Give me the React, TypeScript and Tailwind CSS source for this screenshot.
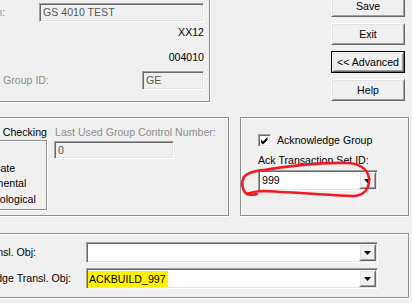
import type { ReactNode } from "react"

// classic win32 bevels
const sunken =
    "border border-t-[#a0a0a0] border-l-[#a0a0a0] border-r-white border-b-white shadow-[inset_1px_1px_0_#696969,inset_-1px_-1px_0_#e3e3e3]"
const raised =
    "border border-t-white border-l-white border-r-[#696969] border-b-[#696969] shadow-[inset_1px_1px_0_#e3e3e3,inset_-1px_-1px_0_#a0a0a0]"
const etched = "border border-[#909090] shadow-[inset_1px_1px_0_#ffffff,1px_1px_0_#ffffff]"

const grey = "text-[#8d8d8d]"

// label that is right-aligned to a fixed end and spills to the left
function Label({ width, className = "", children }: { width: string; className?: string; children: ReactNode }) {
    return (
        <div className={`flex justify-end shrink-0 ${width}`}>
            <span className={`whitespace-nowrap shrink-0 ${className}`}>{children}</span>
        </div>
    )
}

function Btn({ children, primary }: { children: ReactNode; primary?: boolean }) {
    if (primary) {
        return (
            <div className="h-[22px] w-[74px] border border-black">
                <div className={`h-full w-full flex items-center justify-center ${raised}`}>{children}</div>
            </div>
        )
    }
    return <div className={`h-[22px] w-[74px] flex items-center justify-center ${raised}`}>{children}</div>
}

function Combo({ className = "", children }: { className?: string; children?: ReactNode }) {
    return (
        <div className={`flex h-[21px] p-[1px] bg-white shrink-0 ${sunken} ${className}`}>
            <div className="flex-1 flex items-center overflow-hidden">{children}</div>
            <div className={`w-[17px] h-[17px] shrink-0 flex items-center justify-center bg-[#f0f0f0] ${raised}`}>
                <svg width="7" height="4" viewBox="0 0 7 4">
                    <polygon points="0,0 7,0 3.5,4" fill="#000" />
                </svg>
            </div>
        </div>
    )
}

function ReadOnlyBox({ className = "", children }: { className?: string; children: ReactNode }) {
    return (
        <div className={`flex items-center pl-[3px] shrink-0 bg-[#f0f0f0] text-[#555] ${sunken} ${className}`}>
            {children}
        </div>
    )
}

function Radio({ children, className = "" }: { children: ReactNode; className?: string }) {
    return (
        <div className={`flex items-center h-[13px] ${className}`}>
            <div className="w-[12px] h-[12px] rounded-full bg-white border border-[#808080] shrink-0" />
            <span className="ml-[5px] whitespace-nowrap">{children}</span>
        </div>
    )
}

export default function App() {
    return (
        <div className="relative w-[412px] h-[303px] overflow-hidden bg-[#f0f0f0] text-black text-[10.6px] leading-[13px] font-['Liberation_Sans',Arial,sans-serif]">
            {/* Top: header fields + dialog buttons */}
            <div className="flex -mt-[12px]">
                <div className={`-ml-[12px] w-[222px] h-[114px] shrink-0 flex flex-col pt-[14px] ${etched}`}>
                    <div className="flex items-center h-[19px]">
                        <Label width="w-[16px]" className={grey}>Description:</Label>
                        <ReadOnlyBox className="ml-[34px] w-[165px] h-[19px]">GS 4010 TEST</ReadOnlyBox>
                    </div>
                    <div className="mt-[4px] flex justify-end w-[215px] h-[13px]">XX12</div>
                    <div className="mt-[12px] flex justify-end w-[215px] h-[13px]">004010</div>
                    <div className="mt-[7px] flex items-center h-[19px]">
                        <div className={`w-[69px] shrink-0 pl-[14px] whitespace-nowrap ${grey}`}>Group ID:</div>
                        <ReadOnlyBox className="ml-[84px] w-[62px] h-[19px]">GE</ReadOnlyBox>
                    </div>
                </div>

                <div className="ml-[121px] mt-[7px] flex flex-col gap-[6px]">
                    <Btn>Save</Btn>
                    <Btn>Exit</Btn>
                    <Btn primary>&lt;&lt; Advanced</Btn>
                    <Btn>Help</Btn>
                </div>
            </div>

            {/* Middle: control number checking + acknowledgement */}
            <div className="flex mt-[15px] h-[99px]">
                <div className={`-ml-[12px] w-[241px] h-full shrink-0 flex ${etched}`}>
                    <div className="w-[58px] shrink-0 flex flex-col pt-[8px]">
                        <Label width="w-[58px]">Control Number Checking</Label>
                        <div className={`mt-[1px] -ml-[50px] w-[108px] h-[70px] shrink-0 flex flex-col pt-[5px] pl-[14px] ${etched}`}>
                            <Radio>None</Radio>
                            <Radio className="mt-[3px]">Duplicate</Radio>
                            <Radio className="mt-[2px]">Incremental</Radio>
                            <Radio className="mt-[3px]">Chronological</Radio>
                        </div>
                    </div>
                    <div className="ml-[8px] flex flex-col pt-[8px]">
                        <div className={`h-[13px] whitespace-nowrap ${grey}`}>Last Used Group Control Number:</div>
                        <ReadOnlyBox className="mt-[2px] -ml-[1px] w-[120px] h-[18px]">0</ReadOnlyBox>
                    </div>
                </div>

                <div className={`ml-[11px] w-[169px] h-full shrink-0 flex flex-col ${etched}`}>
                    <div className="flex items-center pl-[17px] mt-[16px] h-[13px]">
                        <div className={`w-[13px] h-[13px] shrink-0 bg-white flex items-center justify-center ${sunken}`}>
                            <svg width="11" height="11" viewBox="0 0 11 11">
                                <polygon points="2,4.5 4,6.5 8.5,2 8.5,5 4,9.5 2,7.5" fill="#000" />
                            </svg>
                        </div>
                        <span className="ml-[6px] whitespace-nowrap">Acknowledge Group</span>
                    </div>
                    <div className="pl-[17px] mt-[7px] h-[13px] whitespace-nowrap">Ack Transaction Set ID:</div>
                    <Combo className="ml-[17px] mt-[3px] w-[120px]">
                        <span className="pl-[2px]">999</span>
                    </Combo>
                </div>
            </div>

            {/* Bottom: translation objects */}
            <div className={`mt-[17px] -ml-[12px] w-[421px] h-[65px] flex flex-col pt-[8px] ${etched}`}>
                <div className="flex items-center h-[21px]">
                    <Label width="w-[47px]">Transl. Obj:</Label>
                    <Combo className="ml-[50px] w-[292px]" />
                </div>
                <div className="mt-[5px] flex items-center h-[21px]">
                    <Label width="w-[82px]">Acknowledge Transl. Obj:</Label>
                    <Combo className="ml-[15px] w-[292px]">
                        <span className="bg-[#fff200] pl-[1px] pr-[2px] leading-[16px]">ACKBUILD_997</span>
                    </Combo>
                </div>
            </div>

            {/* hand-drawn red annotation */}
            <svg
                className="absolute left-[238px] top-[158px] pointer-events-none"
                width="136"
                height="42"
                viewBox="0 0 136 42"
                fill="none"
            >
                <path
                    d="M20 13 C44 9 80 4 110 5 C125 6 132 14 131 24 C130 33 124 38 115 38 C90 37 50 34 25 33 C16 33 12 35 9 36 C4 33 3 24 6 19 C9 15 14 14 24 12"
                    stroke="#ed1c24"
                    strokeWidth="2.6"
                    strokeLinecap="round"
                    strokeLinejoin="round"
                />
                <path d="M9 36 C12 37 16 37 19 36" stroke="#ed1c24" strokeWidth="2.4" strokeLinecap="round" />
            </svg>
        </div>
    )
}
